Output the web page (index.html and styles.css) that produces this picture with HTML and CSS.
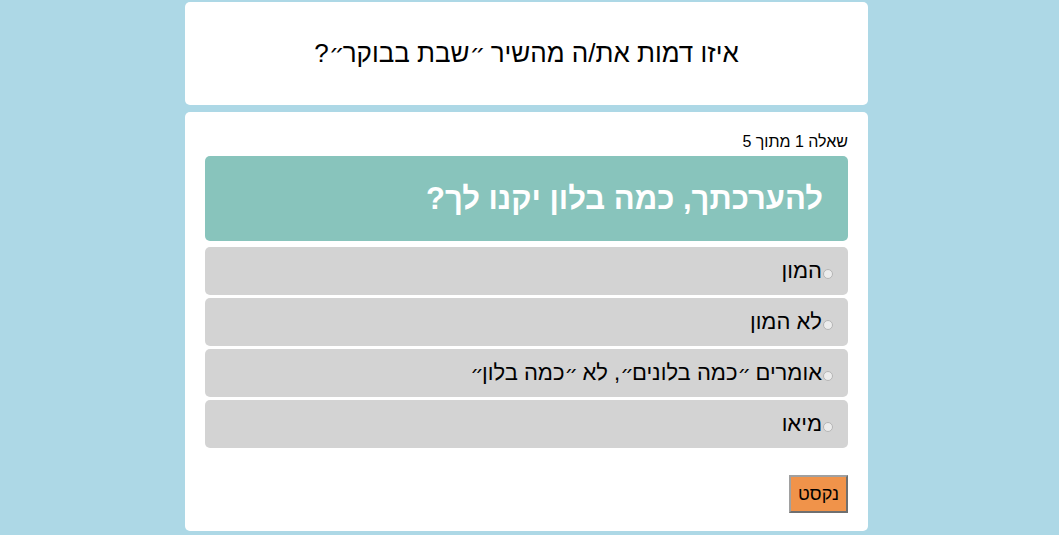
FILE: index.html
```html
<!DOCTYPE html>
<html lang="he" dir="rtl">
<head>
<meta charset="utf-8">
<title>שבת בבוקר</title>
<link rel="stylesheet" href="styles.css">
</head>
<body>
<div class="page">
  <header class="card title-card">
    <h1 class="title">איזו דמות את/ה מהשיר <span class="q">״</span>שבת בבוקר<span class="q">״</span>?</h1>
  </header>
  <main class="card quiz-card">
    <div class="counter">שאלה 1 מתוך 5</div>
    <div class="question">להערכתך, כמה בלון יקנו לך?</div>
    <ul class="options">
      <li class="option"><span class="radio"></span>המון</li>
      <li class="option"><span class="radio"></span>לא המון</li>
      <li class="option"><span class="radio"></span>אומרים <span class="q">״</span>כמה בלונים<span class="q">״</span>, לא <span class="q">״</span>כמה בלון<span class="q">״</span></li>
      <li class="option"><span class="radio"></span>מיאו</li>
    </ul>
    <div class="actions">
      <button class="next" type="button">נקסט</button>
    </div>
  </main>
</div>
</body>
</html>
```
FILE: styles.css
```css
* { box-sizing: border-box; }
html, body { margin: 0; padding: 0; }
body {
  background: #add8e6;
  font-family: "Liberation Sans", "DejaVu Sans", sans-serif;
  color: #000;
  height: 535px;
  overflow: hidden;
  padding-right: 6px;
}
.page {
  width: 683px;
  margin: 0 auto;
  padding-top: 2px;
  display: flex;
  flex-direction: column;
  gap: 7px;
}
.card {
  background: #fff;
  border-radius: 5px;
}
.title-card {
  height: 103px;
  display: flex;
  align-items: center;
  justify-content: center;
}
.title {
  margin: 0;
  font-size: 26px;
  font-weight: normal;
}
.q {
  font-family: "DejaVu Sans", sans-serif;
  font-size: 0.95em;
  letter-spacing: -0.08em;
}
.quiz-card {
  height: 419px;
  padding: 21px 20px 0;
}
.counter {
  font-size: 16px;
  line-height: 18px;
  margin-bottom: 5px;
}
.question {
  background: #88c4bc;
  color: #fff;
  border-radius: 5px;
  height: 85px;
  display: flex;
  align-items: center;
  padding-right: 25px;
  font-size: 31px;
  font-weight: bold;
}
.options {
  list-style: none;
  margin: 6px 0 0;
  padding: 0;
  display: flex;
  flex-direction: column;
  gap: 3px;
}
.option {
  background: #d3d3d3;
  border-radius: 5px;
  height: 48px;
  line-height: 48px;
  padding-right: 15px;
  font-size: 22px;
}
.radio {
  display: inline-block;
  width: 10px;
  height: 10px;
  border-radius: 50%;
  border: 1px solid #b5b5b5;
  background: #ececec;
  margin-left: 1px;
  vertical-align: -1px;
}
.actions {
  display: flex;
  justify-content: flex-start;
  padding-top: 27px;
}
.next {
  width: 59px;
  height: 38px;
  background: #f0934a;
  border: 2px solid #8a8a8a;
  border-color: #a0a0a0 #6f6f6f #6f6f6f #a0a0a0;
  font-family: inherit;
  font-size: 18px;
  color: #000;
  padding: 0;
}
```
